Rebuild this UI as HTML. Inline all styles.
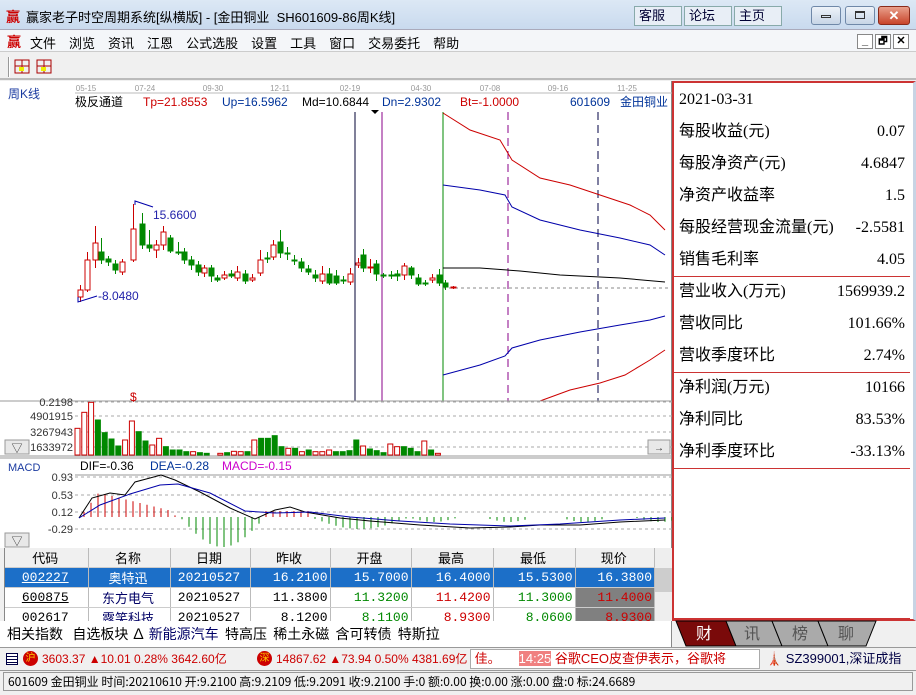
<!DOCTYPE html>
<html><head><meta charset="utf-8">
<style>
*{margin:0;padding:0;box-sizing:border-box}
body{width:916px;height:695px;overflow:hidden;background:#f0f0f0;font-family:"Liberation Sans","Noto Sans CJK SC",sans-serif;position:relative}
.a{position:absolute;white-space:nowrap}
.tb{background:linear-gradient(#dce8f5,#c9daee);}
.btn{position:absolute;top:6px;height:20px;width:48px;background:#e8eef6;border:1px solid #8aa;font-size:13px;color:#003;padding-left:4px;line-height:18px}
.wc{position:absolute;top:6px;height:19px;border:1px solid #6f88a8;border-radius:3px;background:linear-gradient(#eef3f9,#c7d5e6)}
.menu span{margin-right:13px}
.rp div.r{position:absolute;left:5px;right:8px;height:22px;line-height:22px;font-size:16px;font-family:"Liberation Serif","Noto Sans CJK SC",serif;color:#000}
.rp div.r b{font-weight:normal;position:absolute;right:0;top:0;line-height:22px}
table{border-collapse:collapse;font-size:13px;font-family:"Liberation Mono","Noto Sans CJK SC",monospace}
td{height:19px;text-align:right;padding-right:2px;border-right:1px solid #bbb;border-bottom:1px solid #ccc}
</style></head><body>
<div class="a tb" style="left:0;top:0;width:916px;height:30px;border-bottom:1px solid #aab"></div>
<div class="a" style="left:6px;top:7px;font-size:14px;color:#c00;font-weight:bold">赢</div>
<div class="a" style="left:26px;top:7px;font-size:13px;color:#000">赢家老子时空周期系统[纵横版] - [金田铜业&nbsp; SH601609-86周K线]</div>
<div class="btn" style="left:634px">客服</div>
<div class="btn" style="left:684px">论坛</div>
<div class="btn" style="left:734px">主页</div>
<div class="wc" style="left:811px;width:30px"><div style="margin:8px auto 0;width:10px;height:3px;border:1px solid #333"></div></div>
<div class="wc" style="left:845px;width:30px"><div style="margin:4px auto 0;width:10px;height:8px;border:1px solid #333;border-top-width:2px"></div></div>
<div class="wc" style="left:878px;width:32px;background:linear-gradient(#e9a08c,#c8442a);border-color:#8a2a1a;color:#fff;text-align:center;font-size:13px;font-weight:bold;line-height:17px">✕</div>
<div class="a" style="left:0;top:30px;width:916px;height:22px;background:#f4f6f9;border-bottom:1px solid #ccc"></div>
<div class="a" style="left:7px;top:32px;font-size:14px;color:#c00;font-weight:bold">赢</div>
<div class="a menu" style="left:30px;top:33px;font-size:13px"><span>文件</span><span>浏览</span><span>资讯</span><span>江恩</span><span>公式选股</span><span>设置</span><span>工具</span><span>窗口</span><span>交易委托</span><span>帮助</span></div>
<div class="a" style="left:857px;top:34px;width:16px;height:15px;border:1px solid #888;background:#fff;font-size:11px;text-align:center;line-height:13px;font-weight:bold">_</div>
<div class="a" style="left:875px;top:34px;width:16px;height:15px;border:1px solid #888;background:#fff;font-size:10px;text-align:center;line-height:13px;font-weight:bold">🗗</div>
<div class="a" style="left:893px;top:34px;width:16px;height:15px;border:1px solid #888;background:#fff;font-size:11px;text-align:center;line-height:13px;font-weight:bold">✕</div>
<div class="a" style="left:0;top:53px;width:916px;height:27px;background:#f0f0f0;border-bottom:2px solid #bbb"></div>
<div class="a" style="left:8px;top:57px;width:2px;height:20px;border-left:1px solid #999;border-right:1px solid #fff"></div>
<svg class="a" style="left:14px;top:58px" width="44" height="18"><g stroke="#a00" fill="none"><rect x="1" y="2" width="14" height="13"/><line x1="1" y1="8" x2="15" y2="8"/><line x1="8" y1="2" x2="8" y2="15"/><rect x="23" y="2" width="14" height="13"/><line x1="23" y1="8" x2="37" y2="8"/><line x1="30" y1="2" x2="30" y2="15"/></g><rect x="5" y="9" width="5" height="4" fill="#ee0"/><rect x="27" y="9" width="5" height="4" fill="#ee0"/></svg>
<div class="a" style="left:0;top:81px;width:672px;height:467px;background:#fff;border-right:1px solid #888"></div>
<svg class="a" id="ch" style="left:0;top:81px" width="672" height="467" font-family="Liberation Sans,Noto Sans CJK SC,sans-serif"></svg>
<div class="a rp" style="left:672px;top:81px;width:244px;height:540px;background:#fff;border:2px solid #c33;border-right:3px solid #c8d4e4">
<div class="r" style="top:6px">2021-03-31</div>
<div class="r" style="top:38px">每股收益(元)<b>0.07</b></div>
<div class="r" style="top:70px">每股净资产(元)<b>4.6847</b></div>
<div class="r" style="top:102px">净资产收益率<b>1.5</b></div>
<div class="r" style="top:134px">每股经营现金流量(元)<b>-2.5581</b></div>
<div class="r" style="top:166px">销售毛利率<b>4.05</b></div>
<div class="a" style="left:0;top:193px;width:236px;border-top:1px solid #c33"></div>
<div class="r" style="top:198px">营业收入(万元)<b>1569939.2</b></div>
<div class="r" style="top:230px">营收同比<b>101.66%</b></div>
<div class="r" style="top:262px">营收季度环比<b>2.74%</b></div>
<div class="a" style="left:0;top:289px;width:236px;border-top:1px solid #c33"></div>
<div class="r" style="top:294px">净利润(万元)<b>10166</b></div>
<div class="r" style="top:326px">净利同比<b>83.53%</b></div>
<div class="r" style="top:358px">净利季度环比<b>-33.13%</b></div>
<div class="a" style="left:0;top:385px;width:236px;border-top:1px solid #c33"></div>
<div class="a" style="left:0;top:535px;width:236px;border-top:1px solid #c33"></div>
</div>
<svg class="a" style="left:674px;top:620px" width="242" height="27" font-family="Noto Sans CJK SC,sans-serif" font-size="16">
<polygon points="2,1 52,1 62,26 12,26" fill="#7a0a0a" stroke="#000"/>
<polygon points="52,1 98,1 108,26 62,26" fill="#aaa" stroke="#000"/>
<polygon points="98,1 144,1 154,26 108,26" fill="#aaa" stroke="#000"/>
<polygon points="144,1 202,1 192,26 154,26" fill="#aaa" stroke="#000"/>
<text x="22" y="19" fill="#fff">财</text><text x="70" y="19" fill="#555">讯</text><text x="118" y="19" fill="#555">榜</text><text x="164" y="19" fill="#555">聊</text>
</svg>
<div class="a" style="left:4px;top:548px;width:668px;height:73px;background:#fff;overflow:hidden;border-left:1px solid #888">
<table style="width:650px">
<tr style="background:#f0f0f0;font-family:'Noto Sans CJK SC',sans-serif"><td style="text-align:center;width:83px">代码</td><td style="text-align:center;width:82px">名称</td><td style="text-align:center;width:80px">日期</td><td style="text-align:center;width:80px">昨收</td><td style="text-align:center;width:81px">开盘</td><td style="text-align:center;width:82px">最高</td><td style="text-align:center;width:82px">最低</td><td style="text-align:center">现价</td></tr>
<tr style="background:#1c6fc8;color:#fff"><td style="text-align:center;text-decoration:underline">002227</td><td style="text-align:center">奥特迅</td><td style="text-align:center">20210527</td><td>16.2100</td><td>15.7000</td><td>16.4000</td><td>15.5300</td><td>16.3800</td></tr>
<tr><td style="text-align:center;text-decoration:underline">600875</td><td style="text-align:center;color:#006">东方电气</td><td style="text-align:center">20210527</td><td>11.3800</td><td style="color:#080">11.3200</td><td style="color:#c00">11.4200</td><td style="color:#080">11.3000</td><td style="background:#808080;color:#c00">11.4000</td></tr>
<tr><td style="text-align:center">002617</td><td style="text-align:center;color:#006">露笑科技</td><td style="text-align:center">20210527</td><td>8.1200</td><td style="color:#080">8.1100</td><td style="color:#c00">8.9300</td><td style="color:#080">8.0600</td><td style="background:#808080;color:#c00">8.9300</td></tr>
</table>
<div class="a" style="left:650px;top:0;width:17px;height:73px;background:#eee"><div style="margin-top:20px;height:24px;background:#cdcdcd"></div></div>
</div>
<div class="a" style="left:0;top:621px;width:672px;height:26px;background:#fff;border-right:1px solid #888;font-size:14px;line-height:26px;padding-left:7px;font-family:'Noto Sans CJK SC',sans-serif">相关指数&nbsp;&nbsp;&nbsp;自选板块 ∆ <span style="color:#006">新能源汽车</span>&nbsp;&nbsp;特高压&nbsp;&nbsp;稀土永磁&nbsp;&nbsp;含可转债&nbsp;&nbsp;特斯拉</div>
<div class="a" style="left:0;top:647px;width:916px;height:22px;background:#f0f0f0;border-top:1px solid #999;font-size:12px;line-height:22px">
<span class="a" style="left:6px;top:5px;width:12px;height:12px;border:1px solid #004;background:repeating-linear-gradient(#fff 0 2px,#004 2px 3px)"></span>
<span class="a" style="left:23px;top:3px;width:15px;height:15px;border-radius:50%;background:#c00;color:#fc0;font-size:10px;line-height:15px;text-align:center">沪</span>
<span class="a" style="left:42px;color:#c00">3603.37 ▲10.01 0.28% 3642.60亿</span>
<span class="a" style="left:257px;top:3px;width:15px;height:15px;border-radius:50%;background:#c00;color:#fc0;font-size:10px;line-height:15px;text-align:center">深</span>
<span class="a" style="left:276px;color:#c00">14867.62 ▲73.94 0.50% 4381.69亿</span>
<span class="a" style="left:470px;top:1px;width:290px;height:20px;background:#fff;border:1px solid #aaa;font-size:13px;line-height:18px;color:#c00;padding-left:0">&nbsp;佳。&nbsp;&nbsp;&nbsp;&nbsp;&nbsp;<span style="background:#f08080;color:#fff">14:25</span> 谷歌CEO皮查伊表示，谷歌将</span>
<span class="a" style="left:766px;color:#004;font-size:13px">🗼 SZ399001,深证成指</span>
</div>
<div class="a" style="left:0;top:670px;width:916px;height:25px;background:#f0f0f0;border-top:1px solid #999"></div>
<div class="a" style="left:3px;top:672px;width:910px;height:19px;border:1px solid #999;font-size:12px;line-height:17px;padding-left:4px;font-family:'Noto Sans CJK SC',sans-serif">601609 金田铜业 时间:20210610 开:9.2100 高:9.2109 低:9.2091 收:9.2100 手:0 额:0.00 换:0.00 涨:0.00 盘:0 标:24.6689</div>
<script>
var s=document.getElementById('ch'),h='',O=81;
function Y(y){return y-O}
function t(x,y,txt,c,fs,anc){h+='<text x="'+x+'" y="'+Y(y)+'" fill="'+c+'" font-size="'+fs+'"'+(anc?' text-anchor="'+anc+'"':'')+'>'+txt+'</text>';}
function L(x1,y1,x2,y2,c,d){h+='<line x1="'+x1+'" y1="'+Y(y1)+'" x2="'+x2+'" y2="'+Y(y2)+'" stroke="'+c+'"'+(d?' stroke-dasharray="'+d+'"':'')+'/>';}
var ds=[['05-15',86],['07-24',145],['09-30',213],['12-11',280],['02-19',350],['04-30',421],['07-08',490],['09-16',558],['11-25',627]];
ds.forEach(function(d){t(d[1],91,d[0],'#999',8,'middle')});
L(75,93,672,93,'#bbb');
t(8,98,'周K线','#1a3aa0',12);
t(75,106,'极反通道','#000',12);t(143,106,'Tp=21.8553','#c00',12);t(222,106,'Up=16.5962','#003399',12);t(302,106,'Md=10.6844','#000',12);t(382,106,'Dn=2.9302','#003399',12);t(460,106,'Bt=-1.0000','#c00',12);t(570,106,'601609','#003399',12);t(620,106,'金田铜业','#003399',12);
h+='<polygon points="371,'+Y(110)+' 379,'+Y(110)+' 375,'+Y(114)+'" fill="#000"/>';
L(355,112,355,401,'#003');L(382,112,382,401,'#808');L(443,112,443,401,'#080');L(508,112,508,401,'#808','8,5');L(598,112,598,401,'#004','8,5');
L(443,288,672,288,'#888','3,3');
function P(pts,c){h+='<polyline fill="none" stroke="'+c+'" points="'+pts.map(function(p){return p[0]+','+Y(p[1])}).join(' ')+'"/>';}
P([[443,113],[470,130],[500,140],[512,160],[540,178],[570,185],[600,195],[630,205],[650,215],[665,230]],'#c00');
P([[443,185],[480,190],[505,195],[512,207],[540,220],[580,230],[620,238],[650,245],[665,255]],'#00a');
P([[443,268],[480,268],[520,271],[560,275],[620,278],[665,282]],'#000');
P([[443,375],[480,365],[505,356],[512,348],[540,340],[580,332],[620,325],[650,320],[665,316]],'#00a');
P([[540,401],[570,390],[600,383],[625,375],[650,360],[665,350]],'#c00');
var c=[[78,290,297,1,285,302],[85,260,290,1,252,292],[93,243,260,1,226,268],[99,252,260,0,238,264],[106,259,262,0,256,266],[113,264,270,0,260,274],[120,262,272,1,259,275],[131,229,260,1,204,262],[140,224,245,0,213,249],[147,245,248,0,230,252],[154,245,250,1,240,258],[161,232,245,1,226,250],[168,238,251,0,235,253],[176,252,253,0,242,255],[182,252,260,0,248,264],[189,260,265,0,256,270],[196,265,272,0,261,276],[202,268,273,1,265,277],[209,268,276,0,265,282],[215,278,280,0,275,282],[222,275,278,1,271,280],[229,274,276,0,270,278],[235,272,278,1,266,281],[243,274,281,0,270,284],[250,278,280,1,274,282],[258,260,273,1,250,276],[265,258,259,0,252,263],[271,245,257,1,240,260],[278,242,253,0,230,258],[285,253,254,0,247,260],[292,260,261,0,255,265],[299,262,268,0,258,272],[306,269,272,0,265,275],[313,275,278,0,270,282],[320,274,281,1,266,284],[327,274,283,0,268,285],[334,276,283,0,270,285],[341,280,281,0,276,284],[348,274,282,1,268,285],[356,263,265,1,258,268],[361,255,268,0,249,272],[368,267,268,1,259,273],[374,264,274,0,260,281],[381,275,276,0,273,278],[389,275,276,0,271,279],[395,274,276,0,270,281],[402,266,275,1,263,280],[409,268,275,0,266,279],[416,278,284,0,274,286],[423,283,284,0,280,286],[430,278,280,1,274,283],[437,275,283,0,269,286],[443,283,287,0,280,290],[451,287,288,1,286,289]];
c.forEach(function(k){var col=k[3]?'#c00':'#080';L(k[0]+2.5,k[4],k[0]+2.5,k[5],col);h+='<rect x="'+k[0]+'" y="'+Y(k[1])+'" width="5" height="'+Math.max(1,k[2]-k[1])+'" fill="'+(k[3]?'#fff':col)+'" stroke="'+col+'"/>';});
P([[135,205],[135,201],[153,207]],'#00a');t(153,219,'15.6600','#22a',12);
P([[78,297],[78,302],[97,296]],'#00a');t(98,300,'-8.0480','#22a',12);
L(0,401,672,401,'#999');
[[402,'0.2198'],[416,'4901915'],[432,'3267943'],[447,'1633972']].forEach(function(a){t(73,a[0]+4,a[1],'#333',11,'end');L(75,a[0],672,a[0],'#aaa','3,3');});
t(130,401,'$','#c00',12);
var v=[145,97,67,120,158,177,198,180,123,155,183,195,175,200,210,210,215,215,218,220,225,220,218,214,215,215,180,175,175,167,200,205,205,215,210,215,215,210,215,215,212,180,198,207,212,218,192,200,200,205,215,183,210,220];
var vc='rrrggggrrggrrggggrgggrgrrgrggggrgrgrrrggggrgggrrgggrgr';
v.forEach(function(q,i){var x=75+i*6.8,y=380+q/3,r=vc[i]=='r',col=r?'#c00':'#080';h+='<rect x="'+x+'" y="'+Y(y)+'" width="5" height="'+(455-y)+'" fill="'+(r?'#fff':col)+'" stroke="'+col+'"/>';});
L(0,456,672,456,'#999');L(0,458,672,458,'#999');
h+='<rect x="5" y="'+Y(440)+'" width="24" height="14" fill="#e8e8e8" stroke="#999"/>';t(17,452,'▽','#333',11,'middle');
h+='<rect x="648" y="'+Y(440)+'" width="22" height="14" fill="#e8e8e8" stroke="#999"/>';t(659,451,'→','#333',10,'middle');
t(8,471,'MACD','#1a3aa0',11);t(80,470,'DIF=-0.36','#000',12);t(150,470,'DEA=-0.28','#003399',12);t(222,470,'MACD=-0.15','#c0c',12);
L(75,475,672,475,'#999');
[[477,'0.93'],[495,'0.53'],[512,'0.12'],[529,'-0.29']].forEach(function(a){t(73,a[0]+4,a[1],'#333',11,'end');L(75,a[0],672,a[0],'#aaa','3,3');});
var z=517;
for(var i=0;i<85;i++){var x=84+i*7,val;
 if(x<180)val=(x<100?(x-80)*1.3:24-(x-100)*0.25)*(x<175?1:0.3);
 else if(x<265)val=-Math.sin((x-180)/85*Math.PI)*30;
 else if(x<310)val=6;
 else if(x<410)val=-Math.sin((x-310)/100*Math.PI)*12;
 else val=(Math.sin(x/12)*3)-2;
 if(Math.abs(val)<1)continue;L(x,z,x,z-val,val>0?'#c00':'#080');}
P([[79,518],[92,498],[110,493],[125,495],[135,482],[150,478],[161,475],[175,480],[200,492],[230,508],[255,519],[275,510],[290,507],[305,512],[340,518],[370,521],[420,525],[470,528],[510,527],[540,525],[580,525],[620,522],[665,520]],'#000');
P([[79,518],[100,505],[130,494],[160,485],[178,484],[210,493],[245,511],[275,513],[310,512],[350,517],[400,521],[450,524],[510,526],[560,524],[620,520],[665,518]],'#00a');
h+='<rect x="5" y="'+Y(533)+'" width="24" height="14" fill="#e8e8e8" stroke="#999"/>';t(17,545,'▽','#333',11,'middle');
s.innerHTML=h;
</script>
</body></html>
